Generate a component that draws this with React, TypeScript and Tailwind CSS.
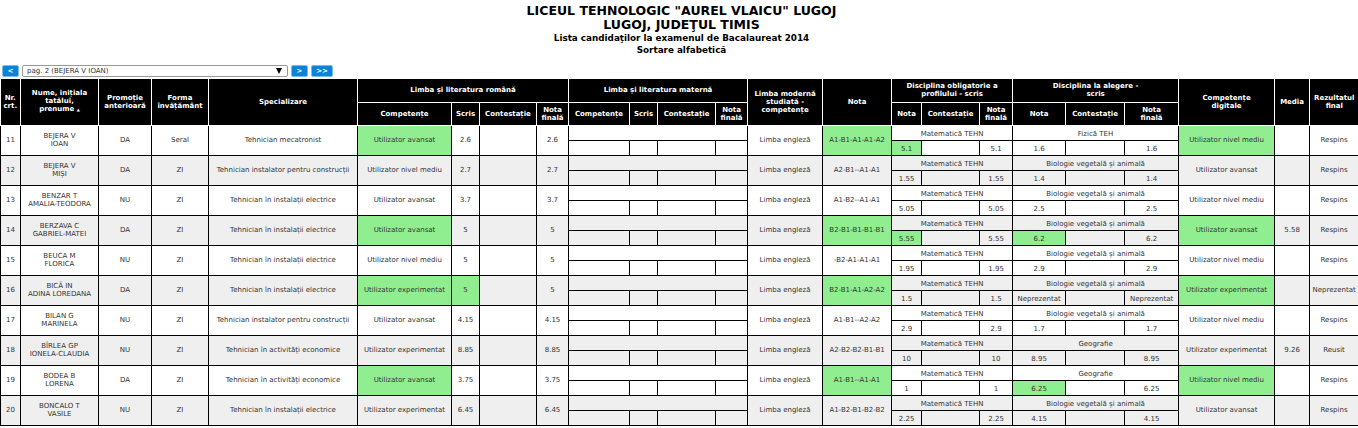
const grades: React.ReactNode[] = ["Competențe", "Scris", "Contestație", <>Nota<br />finală</>];

interface Row {
  nr: number;
  nume: [string, string];
  promotie: string;
  forma: string;
  spec: string;
  comp: string;
  compOk?: boolean;
  scris: string;
  scrisOk?: boolean;
  cod: string;
  codOk?: boolean;
  obl: string;
  oblNota: string;
  oblOk?: boolean;
  ale: string;
  aleNota: string;
  aleOk?: boolean;
  dig: string;
  digOk?: boolean;
  media?: string;
  rez: string;
}

const ELECTRIC = "Tehnician în instalații electrice";
const CONSTR = "Tehnician instalator pentru construcții";
const ECON = "Tehnician în activități economice";
const BIO = "Biologie vegetală și animală";
const MAT = "Matematică TEHN";
const AV = "Utilizator avansat";
const MED = "Utilizator nivel mediu";
const EXP = "Utilizator experimentat";

const rows: Row[] = [
  { nr: 11, nume: ["BEJERA V", "IOAN"], promotie: "DA", forma: "Seral", spec: "Tehnician mecatronist", comp: AV, compOk: true, scris: "2.6", cod: "A1-B1-A1-A1-A2", codOk: true, obl: MAT, oblNota: "5.1", oblOk: true, ale: "Fizică TEH", aleNota: "1.6", dig: MED, digOk: true, rez: "Respins" },
  { nr: 12, nume: ["BEJERA V", "MIȘI"], promotie: "DA", forma: "ZI", spec: CONSTR, comp: MED, scris: "2.7", cod: "A2-B1--A1-A1", obl: MAT, oblNota: "1.55", ale: BIO, aleNota: "1.4", dig: AV, rez: "Respins" },
  { nr: 13, nume: ["BENZAR T", "AMALIA-TEODORA"], promotie: "NU", forma: "ZI", spec: ELECTRIC, comp: AV, scris: "3.7", cod: "A1-B2--A1-A1", obl: MAT, oblNota: "5.05", ale: BIO, aleNota: "2.5", dig: MED, rez: "Respins" },
  { nr: 14, nume: ["BERZAVA C", "GABRIEL-MATEI"], promotie: "DA", forma: "ZI", spec: ELECTRIC, comp: AV, compOk: true, scris: "5", cod: "B2-B1-B1-B1-B1", codOk: true, obl: MAT, oblNota: "5.55", oblOk: true, ale: BIO, aleNota: "6.2", aleOk: true, dig: AV, digOk: true, media: "5.58", rez: "Respins" },
  { nr: 15, nume: ["BEUCA M", "FLORICA"], promotie: "NU", forma: "ZI", spec: ELECTRIC, comp: MED, scris: "5", cod: "-B2-A1-A1-A1", obl: MAT, oblNota: "1.95", ale: BIO, aleNota: "2.9", dig: MED, rez: "Respins" },
  { nr: 16, nume: ["BICĂ IN", "ADINA LOREDANA"], promotie: "DA", forma: "ZI", spec: ELECTRIC, comp: EXP, compOk: true, scris: "5", scrisOk: true, cod: "B2-B1-A1-A2-A2", codOk: true, obl: MAT, oblNota: "1.5", ale: BIO, aleNota: "Neprezentat", dig: EXP, digOk: true, rez: "Neprezentat" },
  { nr: 17, nume: ["BILAN G", "MARINELA"], promotie: "NU", forma: "ZI", spec: CONSTR, comp: AV, scris: "4.15", cod: "A1-B1--A2-A2", obl: MAT, oblNota: "2.9", ale: BIO, aleNota: "1.7", dig: MED, rez: "Respins" },
  { nr: 18, nume: ["BÎRLEA GP", "IONELA-CLAUDIA"], promotie: "NU", forma: "ZI", spec: ECON, comp: EXP, scris: "8.85", cod: "A2-B2-B2-B1-B1", obl: MAT, oblNota: "10", ale: "Geografie", aleNota: "8.95", dig: EXP, media: "9.26", rez: "Reusit" },
  { nr: 19, nume: ["BODEA B", "LORENA"], promotie: "DA", forma: "ZI", spec: ECON, comp: AV, compOk: true, scris: "3.75", cod: "A1-B1--A1-A1", codOk: true, obl: MAT, oblNota: "1", ale: "Geografie", aleNota: "6.25", aleOk: true, dig: MED, digOk: true, rez: "Respins" },
  { nr: 20, nume: ["BONCALO T", "VASILE"], promotie: "NU", forma: "ZI", spec: ELECTRIC, comp: EXP, scris: "6.45", cod: "A1-B2-B1-B2-B2", obl: MAT, oblNota: "2.25", ale: BIO, aleNota: "4.15", dig: AV, rez: "Respins" },
];

const widths = [20, 78, 53, 57, 149, 94, 28, 57, 32, 61, 28, 58, 32, 75, 69, 30, 58, 33, 53, 59, 54, 96, 35, 49];

function Th({ children, ...props }: React.ThHTMLAttributes<HTMLTableCellElement>) {
  return (
    <th {...props} className="border border-white bg-black p-0 text-center align-middle text-[7px] leading-[8px] font-bold text-white">
      {children}
    </th>
  );
}

function Td({ ok, sub, children, ...props }: React.TdHTMLAttributes<HTMLTableCellElement> & { ok?: boolean; sub?: boolean }) {
  return (
    <td {...props} className={`h-[15px] border border-black p-0 text-center text-[7px] leading-[8px] text-[#333] ${sub ? "pt-[2px]" : ""} ${ok ? "bg-[#90ee90]" : ""}`}>
      {children}
    </td>
  );
}

function NavButton({ label, className }: { label: string; className: string }) {
  return (
    <button className={`flex h-3 items-center justify-center rounded-[2px] border border-[#7db8ee] bg-[#0a84d8] text-[7px] leading-none font-bold text-white ${className}`}>
      {label}
    </button>
  );
}

export default function App() {
  return (
    <div className="h-[428px] w-[1358px] overflow-hidden bg-white font-['DejaVu_Sans',sans-serif]">
      <div className="ml-[5px] pt-[4px] text-center font-bold text-black">
        <div className="text-[12.5px] leading-[14px]">LICEUL TEHNOLOGIC "AUREL VLAICU" LUGOJ</div>
        <div className="text-[12.5px] leading-[14px]">LUGOJ, JUDEŢUL TIMIS</div>
        <div className="text-[8.8px] leading-[12px]">Lista candidaţilor la examenul de Bacalaureat 2014</div>
        <div className="text-[8.8px] leading-[12px]">Sortare alfabetică</div>
      </div>
      <div className="mt-[9px] flex h-3 items-center pl-[2px]">
        <NavButton label="<" className="w-[17px]" />
        <div className="relative ml-[3px] flex h-3 w-[266px] items-center rounded-[2px] border border-[#999] pl-1 text-[7px] text-[#333]">
          pag. 2 (BEJERA V IOAN)
          <span className="absolute top-[2px] right-[5px] h-0 w-0 border-x-[3px] border-t-[6px] border-x-transparent border-t-black" />
        </div>
        <NavButton label=">" className="ml-[3px] w-[17px]" />
        <NavButton label=">>" className="ml-[3px] w-[22px]" />
      </div>
      <table className="mt-[2px] w-[1358px] table-fixed border-collapse">
        <colgroup>
          {widths.map((w, i) => (
            <col key={i} style={{ width: w }} />
          ))}
        </colgroup>
        <thead>
          <tr className="h-[23px] [&>th]:border-t-0 [&>th:first-child]:border-l-0 [&>th:last-child]:border-r-0">
            <Th rowSpan={2}>Nr.<br />crt.</Th>
            <Th rowSpan={2}>
              Nume, inițiala<br />tatălui,<br />prenume <span className="text-[4px]">▲</span>
            </Th>
            <Th rowSpan={2}>Promoție<br />anterioară</Th>
            <Th rowSpan={2}>Forma<br />învățământ</Th>
            <Th rowSpan={2}>Specializare</Th>
            <Th colSpan={4}>Limba și literatura română</Th>
            <Th colSpan={4}>Limba și literatura maternă</Th>
            <Th rowSpan={2}>Limba modernă<br />studiată -<br />competențe</Th>
            <Th rowSpan={2}>Nota</Th>
            <Th colSpan={3}>Disciplina obligatorie a<br />profilului - scris</Th>
            <Th colSpan={3}>Disciplina la alegere -<br />scris</Th>
            <Th rowSpan={2}>Competențe<br />digitale</Th>
            <Th rowSpan={2}>Media</Th>
            <Th rowSpan={2}>Rezultatul<br />final</Th>
          </tr>
          <tr className="h-[23px]">
            {grades.map((g, i) => (
              <Th key={i}>{g}</Th>
            ))}
            {grades.map((g, i) => (
              <Th key={i}>{g}</Th>
            ))}
            <Th>Nota</Th>
            <Th>Contestație</Th>
            <Th>Nota<br />finală</Th>
            <Th>Nota</Th>
            <Th>Contestație</Th>
            <Th>Nota<br />finală</Th>
          </tr>
        </thead>
        {rows.map((r) => (
          <tbody key={r.nr} className={r.nr % 2 === 0 ? "bg-[#efefef]" : ""}>
            <tr>
              <Td rowSpan={2}>{r.nr}</Td>
              <Td rowSpan={2}>
                {r.nume[0]}
                <br />
                {r.nume[1]}
              </Td>
              <Td rowSpan={2}>{r.promotie}</Td>
              <Td rowSpan={2}>{r.forma}</Td>
              <Td rowSpan={2}>{r.spec}</Td>
              <Td rowSpan={2} ok={r.compOk}>{r.comp}</Td>
              <Td rowSpan={2} ok={r.scrisOk}>{r.scris}</Td>
              <Td rowSpan={2} />
              <Td rowSpan={2}>{r.scris}</Td>
              <Td colSpan={4} />
              <Td rowSpan={2}>Limba engleză</Td>
              <Td rowSpan={2} ok={r.codOk}>{r.cod}</Td>
              <Td colSpan={3} sub>{r.obl}</Td>
              <Td colSpan={3} sub>{r.ale}</Td>
              <Td rowSpan={2} ok={r.digOk}>{r.dig}</Td>
              <Td rowSpan={2}>{r.media}</Td>
              <Td rowSpan={2}>{r.rez}</Td>
            </tr>
            <tr>
              <Td />
              <Td />
              <Td />
              <Td />
              <Td sub ok={r.oblOk}>{r.oblNota}</Td>
              <Td />
              <Td sub>{r.oblNota}</Td>
              <Td sub ok={r.aleOk}>{r.aleNota}</Td>
              <Td />
              <Td sub>{r.aleNota}</Td>
            </tr>
          </tbody>
        ))}
      </table>
    </div>
  );
}
